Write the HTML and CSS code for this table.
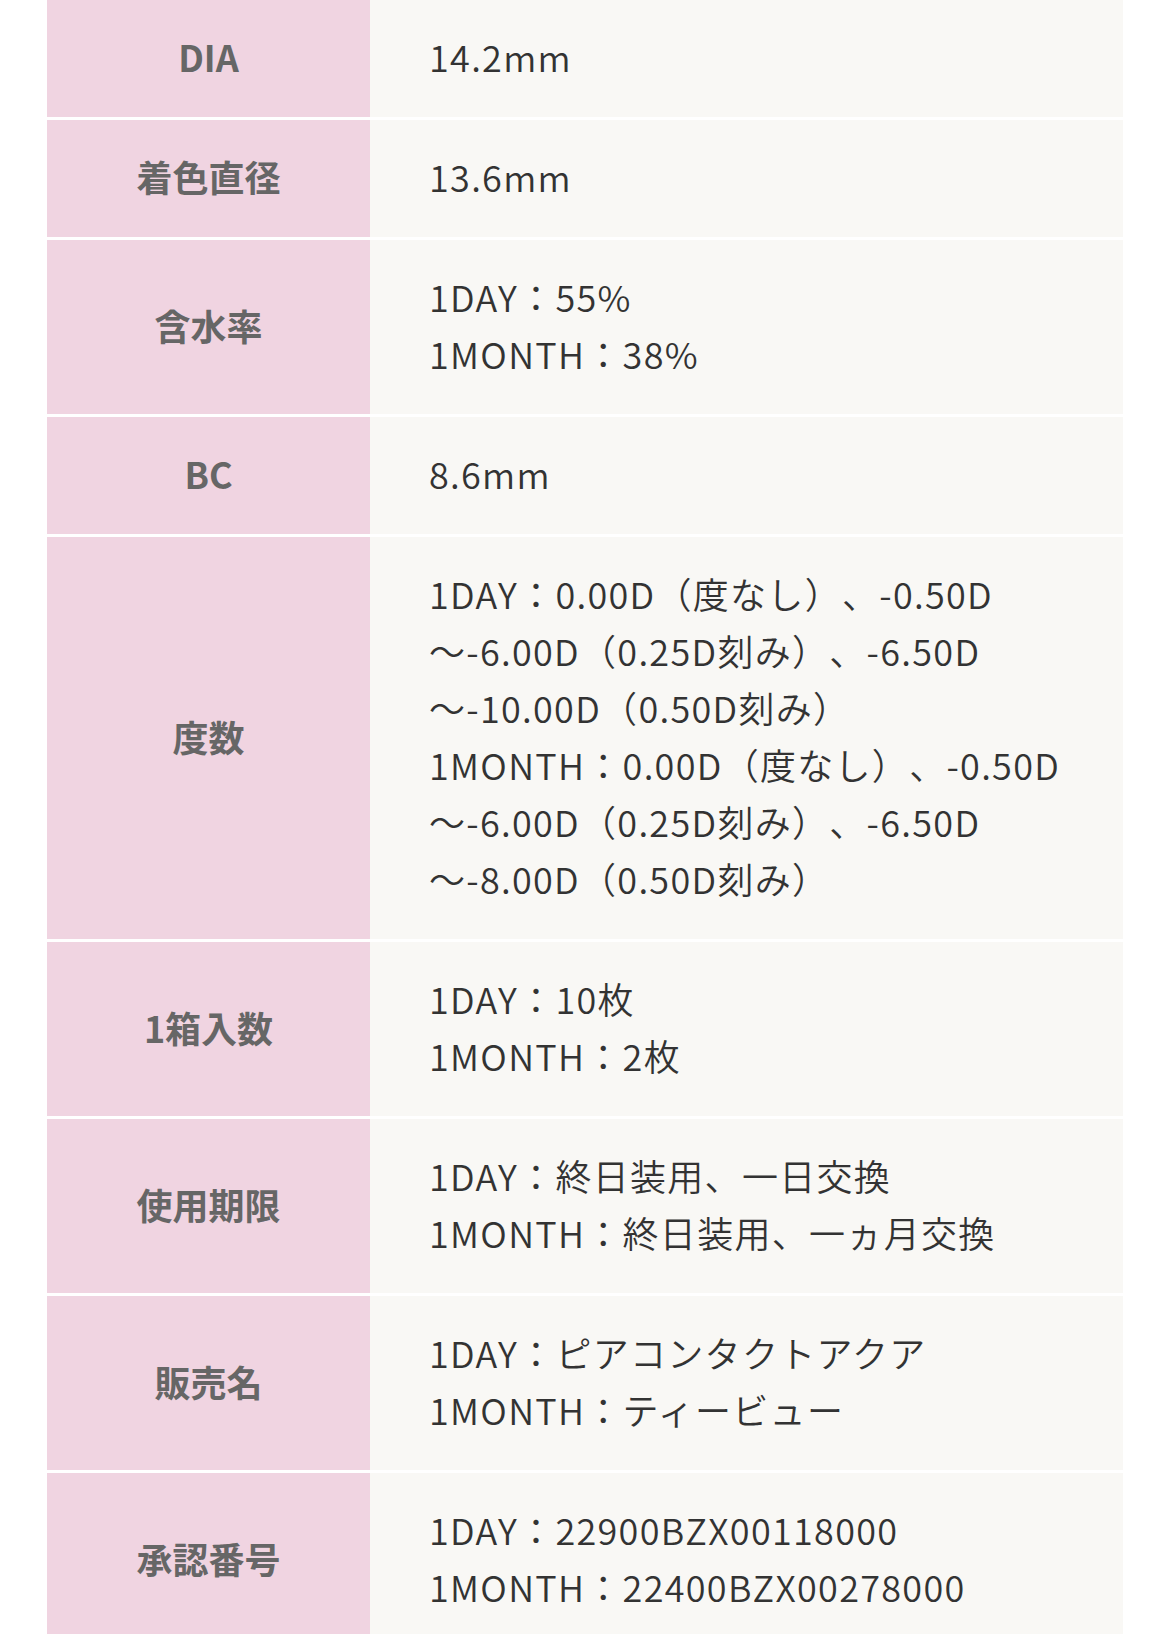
FILE: index.html
```html
<!DOCTYPE html>
<html lang="ja">
<head>
<meta charset="utf-8">
<title>スペック</title>
<link rel="stylesheet" href="styles.css">
</head>
<body>
<dl class="spec">
  <div class="spec-row">
    <dt class="spec-label">DIA</dt>
    <dd class="spec-value">14.2mm</dd>
  </div>
  <div class="spec-row">
    <dt class="spec-label">着色直径</dt>
    <dd class="spec-value">13.6mm</dd>
  </div>
  <div class="spec-row">
    <dt class="spec-label">含水率</dt>
    <dd class="spec-value">1DAY：55%<br>1MONTH：38%</dd>
  </div>
  <div class="spec-row">
    <dt class="spec-label">BC</dt>
    <dd class="spec-value">8.6mm</dd>
  </div>
  <div class="spec-row">
    <dt class="spec-label">度数</dt>
    <dd class="spec-value">1DAY：0.00D（度なし）、-0.50D<br>～-6.00D（0.25D刻み）、-6.50D<br>～-10.00D（0.50D刻み）<br>1MONTH：0.00D（度なし）、-0.50D<br>～-6.00D（0.25D刻み）、-6.50D<br>～-8.00D（0.50D刻み）</dd>
  </div>
  <div class="spec-row">
    <dt class="spec-label">1箱入数</dt>
    <dd class="spec-value">1DAY：10枚<br>1MONTH：2枚</dd>
  </div>
  <div class="spec-row">
    <dt class="spec-label">使用期限</dt>
    <dd class="spec-value">1DAY：終日装用、一日交換<br>1MONTH：終日装用、一ヵ月交換</dd>
  </div>
  <div class="spec-row">
    <dt class="spec-label">販売名</dt>
    <dd class="spec-value">1DAY：ピアコンタクトアクア<br>1MONTH：ティービュー</dd>
  </div>
  <div class="spec-row">
    <dt class="spec-label">承認番号</dt>
    <dd class="spec-value">1DAY：22900BZX00118000<br>1MONTH：22400BZX00278000</dd>
  </div>
</dl>
</body>
</html>
```
FILE: styles.css
```css
html, body {
  margin: 0;
  padding: 0;
  background: #ffffff;
}

body {
  font-family: "Noto Sans CJK JP", "Noto Sans", sans-serif;
  text-spacing-trim: space-all;
}

.spec {
  margin: 0 47px;
  padding: 0;
  display: flex;
  flex-direction: column;
  gap: 3px;
}

.spec-row {
  display: grid;
  grid-template-columns: 323px 1fr;
}

.spec-label {
  margin: 0;
  padding: 0 0 4px;
  background: #f0d4e1;
  color: #666666;
  font-weight: 700;
  font-size: 36px;
  line-height: 57px;
  display: flex;
  align-items: center;
  justify-content: center;
  text-align: center;
}

.spec-value {
  margin: 0;
  background: #f9f8f5;
  color: #333333;
  font-weight: 350;
  font-size: 36px;
  line-height: 57px;
  letter-spacing: 1.3px;
  padding: 28px 20px 32px 59px;
  white-space: nowrap;
}
```
